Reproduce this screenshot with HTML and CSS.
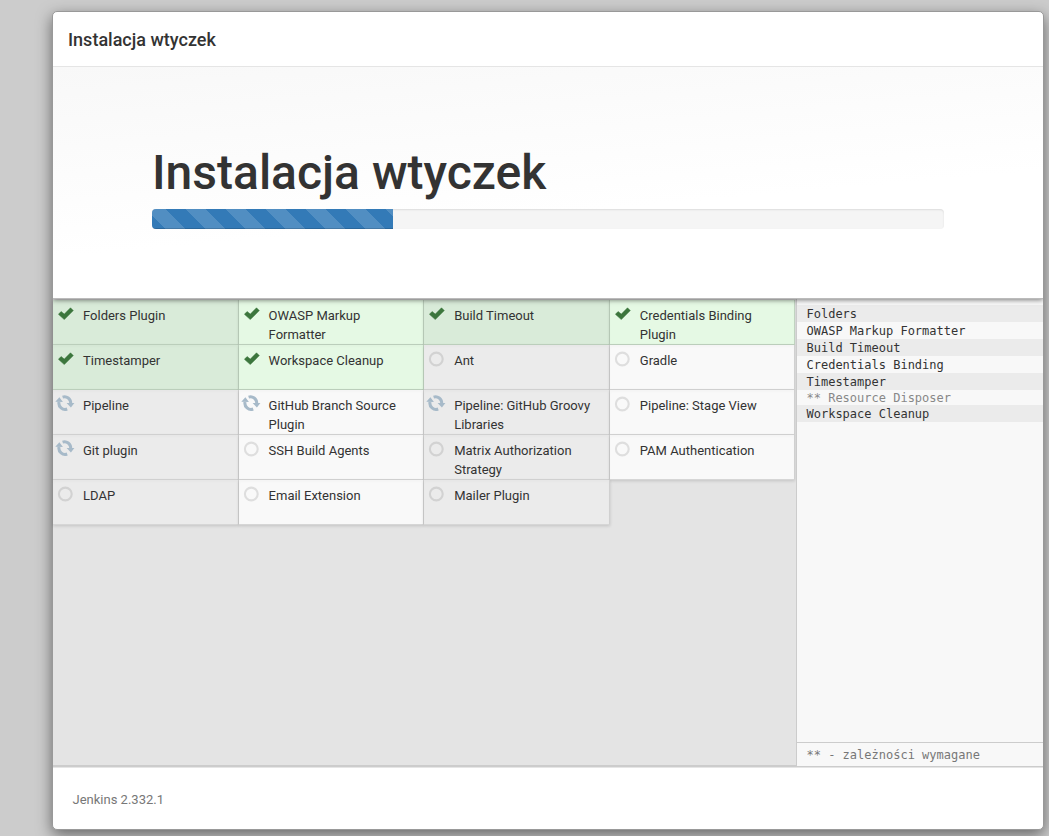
FILE: index.html
```
<!DOCTYPE html>
<html lang="pl">
<head>
<meta charset="utf-8">
<title>Instalacja wtyczek</title>
<link rel="stylesheet" href="styles.css">
</head>
<body>
<svg class="defs" aria-hidden="true">
  <symbol id="check" viewBox="0 0 16 13"><path d="M.4 7.3 3.1 4.5l3.2 2.6L12.5.8l2.8 2.8-9 9z" fill="#3c763d" stroke="#3c763d" stroke-width=".5" stroke-linejoin="round"/></symbol>
  <symbol id="ring" viewBox="0 0 16 16"><circle cx="8.3" cy="8" r="6.4" fill="none" stroke="currentColor" stroke-width="2.1"/></symbol>
  <symbol id="sync" viewBox="0 0 20 16">
    <path d="M7.6 2.1A6.2 6.2 0 0 1 15.7 8.2M12.2 14A6.2 6.2 0 0 1 4 7" fill="none" stroke="currentColor" stroke-width="3"/>
    <path d="M11.6 8h7.8l-3.5 4.5zM.3 6.8 4.4 2.3 7.9 7z" fill="currentColor"/>
  </symbol>
</svg>
<main class="dialog">
  <header class="header"><h4>Instalacja wtyczek</h4></header>
  <section class="hero">
    <h1>Instalacja wtyczek</h1>
    <div class="progress"><div class="bar"></div></div>
  </section>
  <section class="content">
    <div class="plugins">
      <div class="plugin done odd"><svg class="check"><use href="#check"/></svg><span>Folders Plugin</span></div>
      <div class="plugin done"><svg class="check"><use href="#check"/></svg><span>OWASP Markup Formatter</span></div>
      <div class="plugin done odd"><svg class="check"><use href="#check"/></svg><span>Build Timeout</span></div>
      <div class="plugin done"><svg class="check"><use href="#check"/></svg><span>Credentials Binding Plugin</span></div>
      <div class="plugin done odd"><svg class="check"><use href="#check"/></svg><span>Timestamper</span></div>
      <div class="plugin done"><svg class="check"><use href="#check"/></svg><span>Workspace Cleanup</span></div>
      <div class="plugin odd"><svg class="ring"><use href="#ring"/></svg><span>Ant</span></div>
      <div class="plugin"><svg class="ring"><use href="#ring"/></svg><span>Gradle</span></div>
      <div class="plugin odd"><svg class="sync"><use href="#sync"/></svg><span>Pipeline</span></div>
      <div class="plugin"><svg class="sync"><use href="#sync"/></svg><span>GitHub Branch Source Plugin</span></div>
      <div class="plugin odd"><svg class="sync"><use href="#sync"/></svg><span>Pipeline: GitHub Groovy Libraries</span></div>
      <div class="plugin"><svg class="ring"><use href="#ring"/></svg><span>Pipeline: Stage View</span></div>
      <div class="plugin odd"><svg class="sync"><use href="#sync"/></svg><span>Git plugin</span></div>
      <div class="plugin"><svg class="ring"><use href="#ring"/></svg><span>SSH Build Agents</span></div>
      <div class="plugin odd"><svg class="ring"><use href="#ring"/></svg><span>Matrix Authorization Strategy</span></div>
      <div class="plugin"><svg class="ring"><use href="#ring"/></svg><span>PAM Authentication</span></div>
      <div class="plugin odd"><svg class="ring"><use href="#ring"/></svg><span>LDAP</span></div>
      <div class="plugin"><svg class="ring"><use href="#ring"/></svg><span>Email Extension</span></div>
      <div class="plugin odd"><svg class="ring"><use href="#ring"/></svg><span>Mailer Plugin</span></div>
    </div>
    <aside class="console">
      <div class="log">
        <div>Folders</div>
        <div>OWASP Markup Formatter</div>
        <div>Build Timeout</div>
        <div>Credentials Binding</div>
        <div>Timestamper</div>
        <div class="dep">** Resource Disposer</div>
        <div>Workspace Cleanup</div>
      </div>
      <div class="legend">** - zależności wymagane</div>
    </aside>
  </section>
  <footer class="footer">Jenkins 2.332.1</footer>
</main>
</body>
</html>
```
FILE: styles.css
```
* { box-sizing: border-box; }
html, body { height: 100%; overflow: hidden; }
body {
  margin: 0;
  padding: 11px 5px 0 52px;
  background: #ccc;
  font: 13px/19px Roboto, sans-serif;
  color: #333;
}
.defs { display: none; }
h1, h4 { margin: 0; font-weight: 500; }
.dialog {
  display: flex;
  flex-direction: column;
  height: 819px;
  border: 1px solid #999;
  border-radius: 5px;
  background: #fff;
  box-shadow: 0 5px 15px rgba(0, 0, 0, .5);
}
.header {
  height: 55px;
  padding: 15px;
  border-bottom: 1px solid #e5e5e5;
}
.header h4 { font-size: 18px; line-height: 26px; }
.hero {
  position: relative;
  z-index: 2;
  height: 232px;
  padding: 79px 99px 0;
  border-bottom: 1px solid #bbb;
  background: linear-gradient(175deg, #f8f8f8, #fff 60%);
  box-shadow: 0 1px 5px rgba(0, 0, 0, .5);
  clip-path: inset(0 0 -10px 0);
}
.hero h1 { font-size: 48px; line-height: 53px; margin-bottom: 10px; }
.progress {
  height: 20px;
  border-radius: 4px;
  overflow: hidden;
  background: #f5f5f5;
  box-shadow: inset 0 1px 2px rgba(0, 0, 0, .1);
}
.bar {
  width: 241px;
  height: 100%;
  background: #337ab7 linear-gradient(45deg, rgba(255, 255, 255, .15) 25%, transparent 25%, transparent 50%, rgba(255, 255, 255, .15) 50%, rgba(255, 255, 255, .15) 75%, transparent 75%) -6px 0 / 40px 40px;
  box-shadow: inset 0 -1px 0 rgba(0, 0, 0, .15);
}
.content {
  display: flex;
  height: 468px;
  background: #e4e4e4;
}
.plugins {
  flex: 1;
  display: grid;
  grid-template-columns: repeat(4, 185.6px);
  grid-auto-rows: 45px;
  align-content: start;
  padding-top: 1px;
  border-bottom: 2px solid #ccc;
}
.plugin {
  display: flex;
  padding: 6px 10px 0 0;
  background: #f9f9f9;
  border-right: 1px solid #d0d0d0;
  border-bottom: 1px solid #d6d6d6;
  box-shadow: 0 1px 3px rgba(0, 0, 0, .15), inset 0 2px 3px rgba(0, 0, 0, .02);
}
.plugin.odd { background: #ebebeb; }
.plugin.done { background: #e5f9e4; border-color: #c0d3c0; }
.plugin.done.odd { background: #d9ebd9; }
.plugin svg { flex: none; color: #dedede; }
.plugin.odd svg { color: #d2d2d2; }
.plugin .check { width: 16px; height: 13px; margin: 1px 9px 0 5px; }
.plugin .ring { width: 16px; height: 16px; margin: 0 10px 0 4px; }
.plugin .sync, .plugin.odd .sync { width: 20px; height: 16px; margin: -1px 8px 0 2px; color: #a7bac9; }
.console {
  width: 247px;
  display: flex;
  flex-direction: column;
  border-left: 1px solid #ccc;
  border-bottom: 1px solid #ccc;
  background: #f8f8f8;
  font: 12px/19px "DejaVu Sans Mono", monospace;
}
.log { flex: 1; padding-top: 6px; }
.log div { padding-left: 9.5px; height: 17px; }
.log div:nth-child(odd) { background: #ebebeb; }
.log .dep { height: 15px; line-height: 17px; color: #888; }
.legend {
  height: 24px;
  padding: 3px 9.5px;
  border-top: 1px solid #ccc;
  color: #777;
}
.footer {
  flex: 1;
  padding: 22px 19.5px 0;
  border-top: 1px solid #e5e5e5;
  color: #777;
}
```
